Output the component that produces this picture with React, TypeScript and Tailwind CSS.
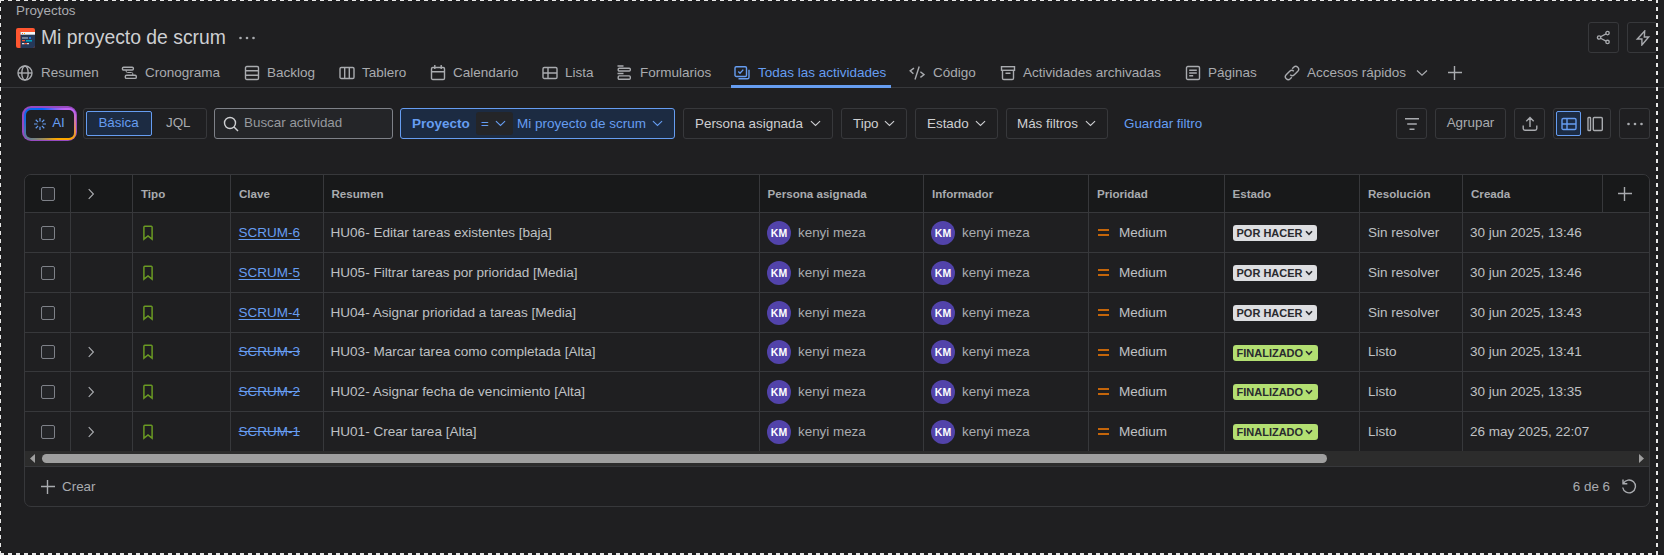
import React from "react";

type P = { d?: string; children?: React.ReactNode; s?: number; w?: number; className?: string };
const I = ({ d, children, s = 16, w = 1.4, className = "" }: P) => (
  <svg width={s} height={s} viewBox="0 0 16 16" fill="none" stroke="currentColor" strokeWidth={w} className={"shrink-0 " + className}>
    {d && <path d={d} />}
    {children}
  </svg>
);
const Chevron = ({ s = 12, className = "" }: { s?: number; className?: string }) => (
  <svg width={s} height={s} viewBox="0 0 12 12" fill="none" stroke="currentColor" strokeWidth="1.2" className={"shrink-0 " + className}>
    <path d="M1 3.5 6 8.2l5-4.7" />
  </svg>
);
const Right = () => (
  <svg width="12" height="12" viewBox="0 0 12 12" fill="none" stroke="#a9abaf" strokeWidth="1.15">
    <path d="M3.7 1.2 8.4 6 3.7 10.8" />
  </svg>
);
const Plus = () => (
  <svg width="14" height="14" viewBox="0 0 14 14" fill="none" stroke="currentColor" strokeWidth="1.4" className="shrink-0">
    <path d="M6.5 0v14M0 6.5h14" />
  </svg>
);
const Dots = () => (
  <svg width="16" height="4" viewBox="0 0 16 4" fill="currentColor" className="shrink-0">
    <circle cx="1.5" cy="2" r="1.3" /><circle cx="8" cy="2" r="1.3" /><circle cx="14.5" cy="2" r="1.3" />
  </svg>
);
const TableIcon = () => (
  <I><rect x="1" y="2.5" width="14" height="11" rx="1.3" /><path d="M1 8h14M6 2.5v11" /></I>
);

const tabs = [
  { t: "Resumen", x: "pl-[17px] w-[121px]", g: "gap-[8px]", i: <I><circle cx="8" cy="8" r="7" /><ellipse cx="8" cy="8" rx="3.2" ry="7" /><path d="M1 8h14" /></I> },
  { t: "Cronograma", x: "w-[123px]", g: "gap-[8px]", i: <I><rect x="1.4" y="2.2" width="11" height="2.8" rx="1.2" /><path d="M5.2 5v1.2q0 1.3 1.3 1.3h4q1.3 0 1.3 1.3V10" strokeWidth="1" /><rect x="4.3" y="10.2" width="11" height="3.2" rx="1.2" /></I> },
  { t: "Backlog", x: "w-[94px]", g: "gap-[7px]", i: <I><rect x="1.5" y="1.5" width="13" height="13" rx="1.3" /><path d="M1.5 5.8h13M1.5 10.2h13" /></I> },
  { t: "Tablero", x: "w-[91px] pl-[1px]", g: "gap-[7px]", i: <I><rect x="1" y="2.5" width="14" height="11" rx="1.3" /><path d="M5.7 2.5v11M10.3 2.5v11" /></I> },
  { t: "Calendario", x: "w-[112px] pl-[1px]", g: "gap-[7px]", i: <I><rect x="1.5" y="2.5" width="13" height="12" rx="1.3" /><path d="M1.5 6.7h13M4.8 0v4M11.2 0v4" /></I> },
  { t: "Lista", x: "w-[75px] pl-[1px]", g: "gap-[7px]", i: <TableIcon /> },
  { t: "Formularios", x: "w-[117px]", g: "gap-[8px]", i: <I><path d="M1.5 1h6M1.5 8.5h6" /><rect x="2.2" y="3.2" width="12.1" height="2.8" rx="1" /><rect x="2.2" y="10.9" width="12.1" height="3.4" rx="1" /></I> },
  { t: "Todas las actividades", x: "w-[175px] pl-[1px]", g: "gap-[8px]", active: true, i: <I><rect x="1" y="1.7" width="11.5" height="9.8" rx="1.3" /><path d="M4.3 6.5 6 8.2l3.3-3.6M15 4.8v7.4q0 1.6-1.6 1.6H4.5" /></I> },
  { t: "Código", x: "w-[91px] pl-[1px]", g: "gap-[8px]", i: <I><path d="M5 3.2 1.2 5.8l3.2 2.9M11.4 6.8l3.6 2.9-3.6 2.7M10.2 1.5 6 14.5" /></I> },
  { t: "Actividades archivadas", x: "w-[185px] pl-[1px]", g: "gap-[7px]", i: <I><rect x="1.5" y="1.7" width="13" height="3.6" /><path d="M2.5 5.3v7.9q0 1.3 1.3 1.3h8.4q1.3 0 1.3-1.3V5.3M5.5 8.3h5" /></I> },
  { t: "Páginas", x: "w-[99px] pl-[1px]", g: "gap-[7px]", i: <I><rect x="1.5" y="1.5" width="13" height="13" rx="1.3" /><path d="M4.2 5.2h7.6M4.2 8h7.6M4.2 10.8h4" /></I> },
];

const Avatar = () => (
  <span className="flex size-[24px] shrink-0 items-center justify-center rounded-full bg-[#5243aa] text-[10.5px] font-bold text-white">KM</span>
);
const Person = () => (
  <div className="flex items-center gap-[7px] pl-[7px] text-[#a9abaf]"><Avatar />kenyi meza</div>
);
const Check = () => <span className="ml-[16px] block size-[14px] rounded-[2px] border border-[#7e8188] bg-[#242528]" />;

const rows = [
  ["SCRUM-6", "HU06- Editar tareas existentes [baja]", "30 jun 2025, 13:46"],
  ["SCRUM-5", "HU05- Filtrar tareas por prioridad [Media]", "30 jun 2025, 13:46"],
  ["SCRUM-4", "HU04- Asignar prioridad a tareas [Media]", "30 jun 2025, 13:43"],
  ["SCRUM-3", "HU03- Marcar tarea como completada [Alta]", "30 jun 2025, 13:41"],
  ["SCRUM-2", "HU02- Asignar fecha de vencimiento [Alta]", "30 jun 2025, 13:35"],
  ["SCRUM-1", "HU01- Crear tarea [Alta]", "26 may 2025, 22:07"],
];
const heights = ["h-[40px]", "h-[40px]", "h-[40px]", "h-[39px]", "h-[40px]", "h-[39px]"];
const gridCols = "grid grid-cols-[46px_62px_98px_93px_436px_164px_165px_136px_135px_103px_1fr]";
const cell = "flex items-center border-r border-[#37383b] last:border-r-0";
const head = cell + " pl-[8px] pt-[1px]";
const box = "flex h-[31px] items-center rounded-[3px] border border-[#37383b]";

export default function App() {
  return (
    <div className="relative flex h-[555px] w-[1664px] flex-col overflow-hidden bg-[#1f1f21] font-['Liberation_Sans',Arial,sans-serif] text-[13.4px] leading-[20px] whitespace-nowrap text-[#a9abaf]">
      <div className="h-[21px] pt-[2px] pl-[16px] text-[13.4px] leading-[18px]">Proyectos</div>
      <div className="flex h-[34px] items-center pl-[16px]">
        <svg width="19" height="20" viewBox="0 0 19 20" className="shrink-0">
          <rect width="19" height="20" rx="2" fill="#ff5630" />
          <path d="M4.5 4H19v14a2 2 0 0 1-2 2H4.5z" fill="#253858" />
          <path d="M4.5 4H19v2.7H4.5z" fill="#f4f5f7" />
          <path d="M6 5h1v1H6z" fill="#ff5630" /><path d="M8 5h1v1H8z" fill="#ffab00" />
          <path d="M6 9.2h6v1.6H6z" fill="#8993a4" /><path d="M6 15h2.5v1.2H6zM11 15h2v1.2h-2z" fill="#dfe1e6" />
          <path d="M13 9.2h2v1.6h-2z" fill="#2684ff" />
          <path d="M10 12h6v1.6h-6z" fill="#00a3bf" />
          <path d="M6 12h3v1.2H6zM8.5 15h2.5v1.2H8.5z" fill="#ff5630" />
        </svg>
        <span className="mb-[2px] ml-[6px] w-[192px] text-[19.35px] leading-[28px] text-[#cecfd2]">Mi proyecto de scrum</span>
        <span className="ml-[6px]"><Dots /></span>
        <div className="flex grow justify-end gap-[8px] self-start pt-[1px] pr-[6px]">
          <span className={box + " w-[31px] justify-center"}>
            <I s={15}><circle cx="3.3" cy="8" r="1.8" /><circle cx="12.3" cy="3.3" r="1.8" /><circle cx="12.3" cy="12.7" r="1.8" /><path d="m4.9 7.2 5.8-3M4.9 8.8l5.8 3" /></I>
          </span>
          <span className={box + " w-[31px] justify-center"}><I s={16} d="M9.7 1 2.3 9h4.6v6l6.8-8H9.3z" /></span>
        </div>
      </div>

      <div className="flex h-[33px] shrink-0 border-b border-[#37383b] text-[13.5px]">
        {tabs.map((t) => (
          <div key={t.t} className={"flex h-[35px] shrink-0 items-center " + t.g + " " + t.x + (t.active ? " text-[#669df1]" : "")}>
            {t.i}{t.t}
          </div>
        ))}
        <div className="flex h-[35px] items-center gap-[7px] pl-[1px]">
          <svg width="16" height="16" viewBox="0 0 16 16" fill="none" stroke="currentColor" strokeWidth="1.4" className="shrink-0">
            <path d="M6.2 9.8a2.9 2.9 0 0 0 4.1 0l3.5-3.5a2.9 2.9 0 0 0-4.1-4.1L8.2 3.7M9.8 6.2a2.9 2.9 0 0 0-4.1 0L2.2 9.7a2.9 2.9 0 0 0 4.1 4.1l1.5-1.5" />
          </svg>
          Accesos rápidos<Chevron className="ml-[3px]" />
          <span className="ml-[13px]"><Plus /></span>
        </div>
        <div className="absolute top-[85px] left-[731px] h-[3px] w-[160px] bg-[#669df1]" />
      </div>

      <div className="flex h-[68px] shrink-0 pt-[20px] pl-[22px]">
        <div className="-mt-[2px] h-[35px] w-[55px] rounded-[9px] bg-[#964ac0] p-[1.5px]">
          <div className="h-full rounded-[7px] bg-[conic-gradient(from_45deg,#bf63f3,#bf63f3_5%,#fca700_22%,#fca700_30%,#1868db_65%,#0065ff_80%,#bf63f3)] p-[2px]">
            <div className="flex h-full items-center justify-center gap-[6px] rounded-[5px] bg-[#1f1f21] text-[#669df1]">
              <I s={12} w={1.6} d="M8 0v4.5M8 11.5V16M0 8h4.5M11.5 8H16M2.3 2.3l3.2 3.2M10.5 10.5l3.2 3.2M2.3 13.7l3.2-3.2M10.5 5.5l3.2-3.2" /><span className="mb-[2px]">AI</span>
            </div>
          </div>
        </div>
        <div className={box + " ml-[6px] w-[124px] pl-[2px]"}>
          <span className="flex h-[25px] w-[66px] items-center justify-center rounded-[2px] border border-[#669df1] bg-[#1c2b42] pr-[1px] pb-[2px] text-[#669df1]">Básica</span>
          <span className="mb-[2px] ml-[14px]">JQL</span>
        </div>
        <div className="ml-[7px] flex h-[31px] w-[179px] items-center rounded-[3px] border border-[#7e8188] bg-[#242528] pl-[8px] text-[#96999e]">
          <I className="text-[#cecfd2]"><circle cx="7" cy="7" r="5.5" /><path d="m11 11 4 4" /></I>
          <span className="mb-[2px] ml-[5px]">Buscar actividad</span>
        </div>
        <div className="ml-[7px] flex h-[31px] w-[275px] items-center rounded-[3px] border border-[#669df1] bg-[#1c2b42] pl-[11px] text-[#669df1]">
          <b className="w-[64px] text-[13.5px]">Proyecto</b>
          <span className="flex h-[23px] w-[37px] items-center rounded-[3px] bg-[#242528] pl-[5px]">=<Chevron s={11} className="ml-[6px]" /></span>
          <span className="ml-[4px] text-[13.5px]">Mi proyecto de scrum</span><Chevron s={11} className="ml-[6px]" />
        </div>
        <div className="ml-[8px] flex gap-[8px] text-[#cecfd2]">
          <div className={box + " w-[150px] justify-between px-[11px]"}>Persona asignada<Chevron s={11} /></div>
          <div className={box + " w-[66px] justify-between px-[11px]"}>Tipo<Chevron s={11} /></div>
          <div className={box + " w-[83px] justify-between px-[11px]"}>Estado<Chevron s={11} /></div>
          <div className={box + " w-[102px] justify-between pr-[11px] pl-[10px]"}>Más filtros<Chevron s={11} /></div>
        </div>
        <span className="ml-[16px] flex h-[31px] items-center text-[#669df1]">Guardar filtro</span>
        <div className="flex grow justify-end gap-[8px] pr-[14px]">
          <div className={box + " w-[31px] justify-center"}><I d="M1 2.8h14M3.2 8h9.6M5.5 13.2h5" /></div>
          <div className={box + " w-[71px] justify-center pb-[2px]"}>Agrupar</div>
          <div className={box + " w-[31px] justify-center"}><I d="M8 11V1.8M4.3 5.2 8 1.5l3.7 3.7M1.2 9.5v3q0 1.7 1.7 1.7h10.2q1.7 0 1.7-1.7v-3" /></div>
          <div className={box + " w-[58px] pl-[2px]"}>
            <span className="flex size-[25px] items-center justify-center rounded-[2px] border border-[#669df1] bg-[#1c2b42] text-[#669df1]"><TableIcon /></span>
            <I className="ml-[6px]"><rect x="1" y="1.5" width="2.5" height="13" rx=".5" /><rect x="6.3" y="1.5" width="9" height="13" rx="1" /></I>
          </div>
          <div className={box + " w-[31px] justify-center"}><Dots /></div>
        </div>
      </div>

      <div className="mt-[18px] ml-[24px] flex h-[333px] w-[1626px] shrink-0 flex-col overflow-hidden rounded-[7px] border border-[#37383b]">
        <div className={gridCols + " h-[38px] shrink-0 border-b border-[#37383b] bg-[#18191a] text-[11.6px] leading-[18px] font-bold"}>
          <div className={cell}><Check /></div>
          <div className={cell + " pl-[14px]"}><Right /></div>
          <div className={head}>Tipo</div>
          <div className={head}>Clave</div>
          <div className={cell + " pl-[7.5px] pt-[1px]"}>Resumen</div>
          <div className={cell + " pl-[7.5px] pt-[1px]"}>Persona asignada</div>
          <div className={head}>Informador</div>
          <div className={head}>Prioridad</div>
          <div className={cell + " pl-[7.5px] pt-[1px]"}>Estado</div>
          <div className={head}>Resolución</div>
          <div className={cell + " pl-[8px]"}>
            <span className="flex h-full w-[132px] items-center border-r border-[#37383b] pt-[1px]">Creada</span>
            <span className="ml-[15px]"><Plus /></span>
          </div>
        </div>
        {rows.map(([key, title, date], i) => (
          <div key={key} className={gridCols + " shrink-0 text-[#bfc1c4] " + heights[i] + (i < 5 ? " border-b border-[#37383b]" : "")}>
            <div className={cell}><Check /></div>
            <div className={cell + " pl-[14px]"}>{i > 2 && <Right />}</div>
            <div className={cell + " pl-[7px]"}><I className="text-[#6a9a23]" w={1.5} d="M3.9 2.2q0-.9.9-.9h6.4q.9 0 .9.9v12L8 10.9l-4.1 3.3z" /></div>
            <div className={cell + " pl-[7.5px] text-[13.5px] text-[#669df1]"}>
              <span className={i < 3 ? "underline underline-offset-2" : "line-through"}>{key}</span>
            </div>
            <div className={cell + " pl-[6.5px] text-[13.55px]"}>{title}</div>
            <div className={cell}><Person /></div>
            <div className={cell}><Person /></div>
            <div className={cell + " pl-[9px]"}>
              <span className="flex w-[11px] flex-col gap-[3px]"><i className="h-[2px] bg-[#c4650a]" /><i className="h-[2px] bg-[#c4650a]" /></span>
              <span className="ml-[10px] text-[13.5px]">Medium</span>
            </div>
            <div className={cell + " pl-[8px]"}>
              <span className={"mt-px flex h-[16px] items-center rounded-[3px] text-[11px] font-bold text-[#292a2e] pl-[3.5px] " + (i < 3 ? "w-[84px] bg-[#dddee1]" : "w-[85px] bg-[#b3df72]")}>
                {i < 3 ? "POR HACER" : "FINALIZADO"}
                <svg width="8" height="8" viewBox="0 0 8 8" fill="none" stroke="currentColor" strokeWidth="1.6" className="ml-[2px]"><path d="m1 2.3 3 3 3-3" /></svg>
              </span>
            </div>
            <div className={cell + " pl-[8px] text-[13.5px]"}>{i < 3 ? "Sin resolver" : "Listo"}</div>
            <div className={cell + " pl-[7px] text-[13.5px]"}>{date}</div>
          </div>
        ))}
        <div className="flex h-[16px] shrink-0 items-center border-b border-[#37383b] bg-[#2c2c2c] px-[5px]">
          <svg width="5" height="9" viewBox="0 0 5 9"><path d="M5 0v9L0 4.5z" fill="#9f9f9f" /></svg>
          <div className="ml-[7px] h-[9px] w-[1285px] rounded-full bg-[#9f9f9f]" />
          <svg width="5" height="9" viewBox="0 0 5 9" className="ml-auto"><path d="M0 0v9l5-4.5z" fill="#9f9f9f" /></svg>
        </div>
        <div className="flex grow items-center pr-[12px] pl-[16px]">
          <Plus /><span className="ml-[7px]">Crear</span>
          <span className="ml-auto">6 de 6</span>
          <I s={16} className="mb-[2px] ml-[11px]"><path d="M2 1.5v4.3h4.3M2.3 5.5A6.4 6.4 0 1 1 1.7 9.5" /></I>
        </div>
      </div>

      <div className="absolute top-0 left-0 h-px w-[1656px] bg-[repeating-linear-gradient(90deg,#e6e6e6_0_4px,#1a1a1c_4px_8px)]" />
      <div className="absolute top-0 left-0 h-full w-px bg-[repeating-linear-gradient(180deg,#e6e6e6_0_3px,#1a1a1c_3px_7px,#e6e6e6_7px_8px)]" />
      <div className="absolute top-0 left-[1656px] h-full w-[2px] bg-[repeating-linear-gradient(180deg,#e6e6e6_0_3px,#1a1a1c_3px_7px,#e6e6e6_7px_8px)]" />
      <div className="absolute top-[553px] left-0 h-[2px] w-[1656px] bg-[repeating-linear-gradient(90deg,#e6e6e6_0_4px,#1a1a1c_4px_8px)]" />
    </div>
  );
}
